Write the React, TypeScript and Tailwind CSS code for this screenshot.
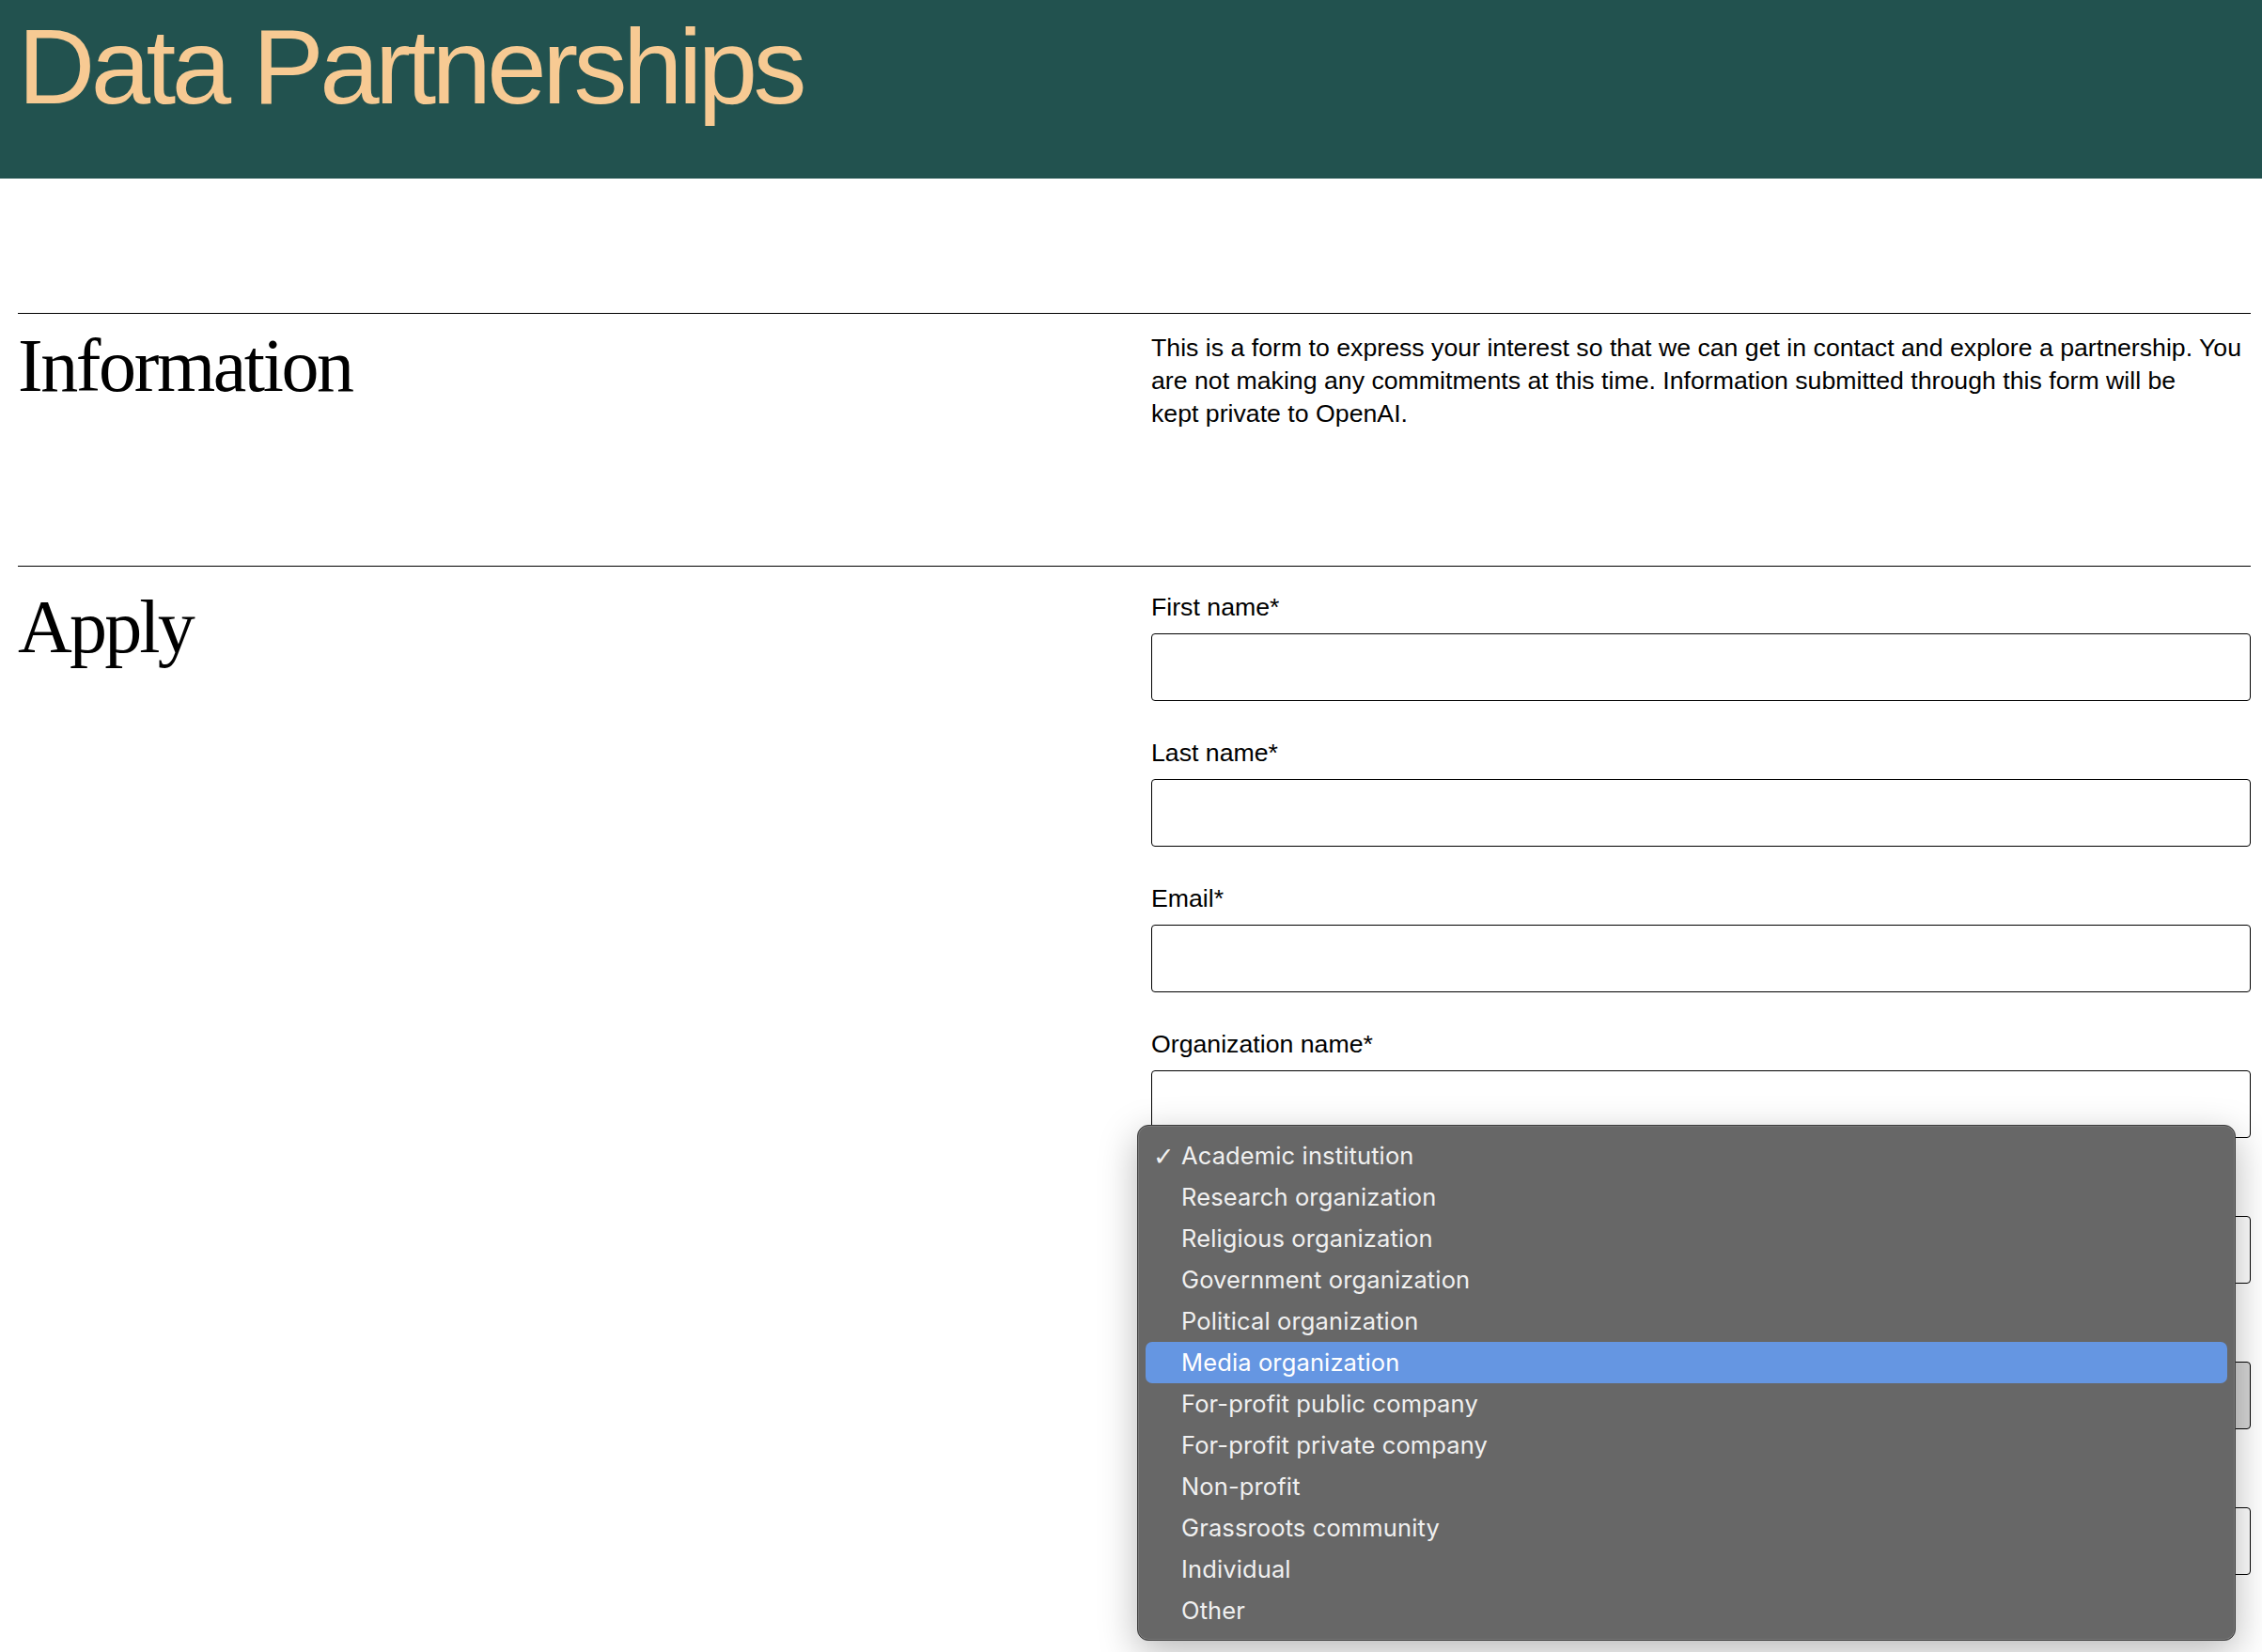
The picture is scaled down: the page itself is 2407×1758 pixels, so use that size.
import React from "react";

const sans = "font-['Liberation_Sans',Arial,sans-serif]";

const fields: { label: string; select?: boolean }[] = [
  { label: "First name*" },
  { label: "Last name*" },
  { label: "Email*" },
  { label: "Organization name*" },
  { label: "" },
  { label: "", select: true },
  { label: "" },
];

const options = [
  "Academic institution",
  "Research organization",
  "Religious organization",
  "Government organization",
  "Political organization",
  "Media organization",
  "For-profit public company",
  "For-profit private company",
  "Non-profit",
  "Grassroots community",
  "Individual",
  "Other",
];

export default function App() {
  return (
    <div className={`min-h-screen bg-white text-black ${sans}`}>
      <header className="h-[190px] bg-[#22524f] pl-[19px] pt-[14px]">
        <h1 className="text-[114px] leading-none tracking-[-0.04em] text-[#f7ca93]">
          Data Partnerships
        </h1>
      </header>

      <main className="pl-[19px] pr-[12px] pt-[143px] pb-[120px]">
        <section className="grid h-[269px] grid-cols-[1206px_1fr] border-t border-black">
          <h2 className="pt-[15px] font-['Liberation_Serif','Times_New_Roman',serif] text-[80px] leading-none tracking-[-0.03em]">
            Information
          </h2>
          <p className="pt-[19px] text-[26.7px] leading-[35px]">
            This is a form to express your interest so that we can get in contact and explore a
            partnership. You
            <br />
            are not making any commitments at this time. Information submitted through this form
            will be
            <br />
            kept private to OpenAI.
          </p>
        </section>

        <section className="grid grid-cols-[1206px_1fr] border-t border-black">
          <h2 className="pt-[24px] font-['Liberation_Serif','Times_New_Roman',serif] text-[80px] leading-none tracking-[-0.035em]">
            Apply
          </h2>
          <div className="relative">
            <div className="flex flex-col gap-[38px] pt-[26px]">
              {fields.map((f, i) => (
                <div key={i} className="flex flex-col gap-[10px]">
                  <label className="h-[35px] text-[26.7px] leading-[35px]">{f.label}</label>
                  <div
                    className={`h-[72px] rounded-[4px] border border-black ${
                      f.select ? "bg-[#d6d6d6]" : "bg-white"
                    }`}
                  />
                </div>
              ))}
            </div>

            <div className="absolute left-[-15px] top-[594px] w-[1169px] rounded-[12px] border border-[#3c3c3c] bg-[#676767] px-[8px] pb-[9px] pt-[10px] shadow-[0_12px_40px_rgba(0,0,0,0.28),inset_0_0_0_1px_rgba(255,255,255,0.12)]">
              {options.map((o, i) => {
                const active = o === "Media organization";
                return (
                  <div
                    key={o}
                    className={`relative flex h-[44px] items-center rounded-[7px] pl-[38px] font-['Inter',sans-serif] text-[25.5px] tracking-[0.005em] ${
                      active ? "bg-[#6596e2] text-white" : "text-[#f0f0f0]"
                    }`}
                  >
                    {i === 0 && (
                      <span className="absolute left-[8px] top-1/2 -translate-y-1/2 font-['DejaVu_Sans',sans-serif] text-[27px] leading-none text-[#f0f0f0]">
                        ✓
                      </span>
                    )}
                    {o}
                  </div>
                );
              })}
            </div>
          </div>
        </section>
      </main>
    </div>
  );
}
